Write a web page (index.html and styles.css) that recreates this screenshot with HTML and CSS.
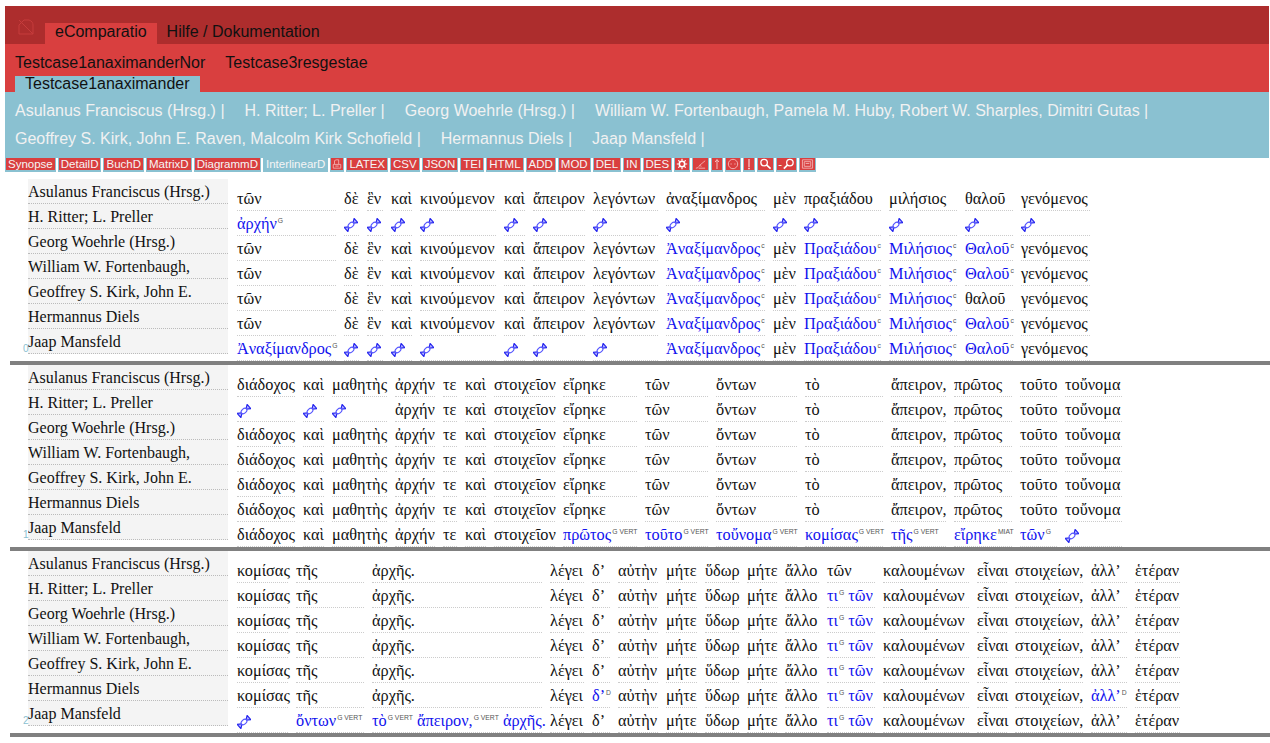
FILE: index.html
```html
<!DOCTYPE html>
<html lang="de">
<head>
<meta charset="utf-8">
<title>eComparatio</title>
<link rel="stylesheet" href="styles.css">
</head>
<body>
<svg class="defs" width="0" height="0" aria-hidden="true"><defs>
<symbol id="cand" viewBox="0 0 14 14"><g transform="rotate(-42 7 7)"><path d="M4.500 7L.3 4.200v5.600zM9.500 7l4.200-2.800v5.600z" fill="#aaf" stroke="#22e" stroke-width="1.100" stroke-linejoin="round"/><ellipse cx="7" cy="7" rx="3.300" ry="2.200" fill="#fff" stroke="#55f" stroke-width="1.100"/></g></symbol>
<symbol id="i-doc" viewBox="0 0 12 12"><path d="M3 6V2l2-1h3v5M1.500 6.500h9V11h-9zM4 8.500h4" fill="none" stroke="#f5b5b5" stroke-width="1"/></symbol>
<symbol id="i-gear" viewBox="0 0 12 12"><circle cx="6" cy="6" r="2.700" fill="none" stroke="#fff" stroke-width="1.600"/><path d="M6 .8v2M6 9.200v2M.8 6h2M9.200 6h2M2.300 2.300l1.400 1.400M8.300 8.300l1.400 1.400M2.300 9.700l1.400-1.400M8.300 3.700l1.400-1.400" stroke="#fff" stroke-width="1.200"/></symbol>
<symbol id="i-pen" viewBox="0 0 14 12"><path d="M2 10.500c2 0 3-1 4-3l6-5M5 10.500h7M6 7.500l2 1" fill="none" stroke="#f3b0b0" stroke-width="1"/></symbol>
<symbol id="i-up" viewBox="0 0 8 12"><path d="M4 11V2M2.200 4L4 1.500 5.800 4" fill="none" stroke="#f7c0c0" stroke-width="1"/></symbol>
<symbol id="i-down" viewBox="0 0 8 12"><path d="M4 1v8" stroke="#f7c0c0" stroke-width="1.400"/><path d="M3 10.500h2" stroke="#f7c0c0" stroke-width="1.400"/></symbol>
<symbol id="i-face" viewBox="0 0 12 12"><circle cx="6" cy="6" r="4.700" fill="none" stroke="#f3b0b0" stroke-width="1"/><path d="M3.500 6h1.200M7.300 6h1.200" stroke="#f3b0b0" stroke-width="1"/></symbol>
<symbol id="i-mag" viewBox="0 0 14 12"><circle cx="5.500" cy="4.500" r="3.500" fill="none" stroke="#fff" stroke-width="1.400"/><path d="M8 7l4.500 4" stroke="#fff" stroke-width="1.800"/></symbol>
<symbol id="i-magr" viewBox="0 0 14 12"><circle cx="8.500" cy="4.500" r="3.500" fill="none" stroke="#fff" stroke-width="1.400"/><path d="M6 7l-4 4" stroke="#fff" stroke-width="1.800"/></symbol>
<symbol id="i-box" viewBox="0 0 14 12"><path d="M1.500 1.500h11v9h-11zM3.500 3.500h7v5h-7zM5 5.500h4" fill="none" stroke="#f3b0b0" stroke-width="1"/></symbol>
</defs></svg>
<header class="top">
<nav class="bar-a"><svg class="logo" viewBox="0 0 16 16"><path d="M1 1l14 14M1 15V6l5-5h5c3 1 4 3 4 5v9z" fill="none" stroke="#c63c3c" stroke-width="1"/></svg><a class="tab on">eComparatio</a><a class="tab">Hilfe / Dokumentation</a></nav>
<nav class="bar-b"><div class="row"><a>Testcase1anaximanderNor</a><a>Testcase3resgestae</a></div><a class="cur">Testcase1anaximander</a></nav>
<nav class="bar-c"><a>Asulanus Franciscus (Hrsg.) |</a><a>H. Ritter; L. Preller |</a><a>Georg Woehrle (Hrsg.) |</a><a>William W. Fortenbaugh, Pamela M. Huby, Robert W. Sharples, Dimitri Gutas |</a><a>Geoffrey S. Kirk, John E. Raven, Malcolm Kirk Schofield |</a><a>Hermannus Diels |</a><a>Jaap Mansfeld |</a></nav>
<div class="tools"><b>Synopse</b><b>DetailD</b><b>BuchD</b><b>MatrixD</b><b>DiagrammD</b><b class="act">InterlinearD</b><b class="ic"><svg class="i10"><use href="#i-doc"/></svg></b><b>LATEX</b><b>CSV</b><b>JSON</b><b>TEI</b><b>HTML</b><b>ADD</b><b>MOD</b><b>DEL</b><b>IN</b><b>DES</b><b class="ic"><svg class="i12"><use href="#i-gear"/></svg></b><b class="ic"><svg class="i14"><use href="#i-pen"/></svg></b><b class="ic"><svg class="i8"><use href="#i-up"/></svg></b><b class="ic"><svg class="i12"><use href="#i-face"/></svg></b><b class="ic"><svg class="i8"><use href="#i-down"/></svg></b><b class="ic"><svg class="i14"><use href="#i-mag"/></svg></b><b class="ic minus">-<svg class="i14"><use href="#i-magr"/></svg></b><b class="ic"><svg class="i14"><use href="#i-box"/></svg></b></div>
</header>
<main>
<section class="block first">
<div class="labels"><div>Asulanus Franciscus (Hrsg.)</div><div>H. Ritter; L. Preller</div><div>Georg Woehrle (Hrsg.)</div><div>William W. Fortenbaugh,</div><div>Geoffrey S. Kirk, John E.</div><div>Hermannus Diels</div><div>Jaap Mansfeld</div></div>
<table class="t1"><colgroup><col><col><col><col><col><col><col><col><col><col><col><col><col><col></colgroup>
<tr><td>τῶν<td>δὲ<td>ἓν<td>καὶ<td>κινούμενον<td>καὶ<td>ἄπειρον<td>λεγόντων<td>ἀναξίμανδρος<td>μὲν<td>πραξιάδου<td>μιλήσιος<td>θαλοῦ<td>γενόμενος
<tr><td><i>ἀρχήν</i><sup>G</sup><td><svg class="c"><use href="#cand"/></svg><td><svg class="c"><use href="#cand"/></svg><td><svg class="c"><use href="#cand"/></svg><td><svg class="c"><use href="#cand"/></svg><td><svg class="c"><use href="#cand"/></svg><td><svg class="c"><use href="#cand"/></svg><td><svg class="c"><use href="#cand"/></svg><td><svg class="c"><use href="#cand"/></svg><td><svg class="c"><use href="#cand"/></svg><td><svg class="c"><use href="#cand"/></svg><td><svg class="c"><use href="#cand"/></svg><td><svg class="c"><use href="#cand"/></svg><td><svg class="c"><use href="#cand"/></svg>
<tr><td>τῶν<td>δὲ<td>ἓν<td>καὶ<td>κινούμενον<td>καὶ<td>ἄπειρον<td>λεγόντων<td><i>Ἀναξίμανδρος</i><sup>c</sup><td>μὲν<td><i>Πραξιάδου</i><sup>c</sup><td><i>Μιλήσιος</i><sup>c</sup><td><i>Θαλοῦ</i><sup>c</sup><td>γενόμενος
<tr><td>τῶν<td>δὲ<td>ἓν<td>καὶ<td>κινούμενον<td>καὶ<td>ἄπειρον<td>λεγόντων<td><i>Ἀναξίμανδρος</i><sup>c</sup><td>μὲν<td><i>Πραξιάδου</i><sup>c</sup><td><i>Μιλήσιος</i><sup>c</sup><td><i>Θαλοῦ</i><sup>c</sup><td>γενόμενος
<tr><td>τῶν<td>δὲ<td>ἓν<td>καὶ<td>κινούμενον<td>καὶ<td>ἄπειρον<td>λεγόντων<td><i>Ἀναξίμανδρος</i><sup>c</sup><td>μὲν<td><i>Πραξιάδου</i><sup>c</sup><td><i>Μιλήσιος</i><sup>c</sup><td>θαλοῦ<td>γενόμενος
<tr><td>τῶν<td>δὲ<td>ἓν<td>καὶ<td>κινούμενον<td>καὶ<td>ἄπειρον<td>λεγόντων<td><i>Ἀναξίμανδρος</i><sup>c</sup><td>μὲν<td><i>Πραξιάδου</i><sup>c</sup><td><i>Μιλήσιος</i><sup>c</sup><td><i>Θαλοῦ</i><sup>c</sup><td>γενόμενος
<tr><td><i>Ἀναξίμανδρος</i><sup>G</sup><td><svg class="c"><use href="#cand"/></svg><td><svg class="c"><use href="#cand"/></svg><td><svg class="c"><use href="#cand"/></svg><td><svg class="c"><use href="#cand"/></svg><td><svg class="c"><use href="#cand"/></svg><td><svg class="c"><use href="#cand"/></svg><td><svg class="c"><use href="#cand"/></svg><td><i>Ἀναξίμανδρος</i><sup>c</sup><td>μὲν<td><i>Πραξιάδου</i><sup>c</sup><td><i>Μιλήσιος</i><sup>c</sup><td><i>Θαλοῦ</i><sup>c</sup><td>γενόμενος
</table>
<span class="num">0</span>
</section>
<section class="block">
<div class="labels"><div>Asulanus Franciscus (Hrsg.)</div><div>H. Ritter; L. Preller</div><div>Georg Woehrle (Hrsg.)</div><div>William W. Fortenbaugh,</div><div>Geoffrey S. Kirk, John E.</div><div>Hermannus Diels</div><div>Jaap Mansfeld</div></div>
<table class="t2"><colgroup><col><col><col><col><col><col><col><col><col><col><col><col><col><col><col></colgroup>
<tr><td>διάδοχος<td>καὶ<td>μαθητὴς<td>ἀρχήν<td>τε<td>καὶ<td>στοιχεῖον<td>εἴρηκε<td>τῶν<td>ὄντων<td>τὸ<td>ἄπειρον,<td>πρῶτος<td>τοῦτο<td>τοὔνομα
<tr><td><svg class="c"><use href="#cand"/></svg><td><svg class="c"><use href="#cand"/></svg><td><svg class="c"><use href="#cand"/></svg><td>ἀρχήν<td>τε<td>καὶ<td>στοιχεῖον<td>εἴρηκε<td>τῶν<td>ὄντων<td>τὸ<td>ἄπειρον,<td>πρῶτος<td>τοῦτο<td>τοὔνομα
<tr><td>διάδοχος<td>καὶ<td>μαθητὴς<td>ἀρχήν<td>τε<td>καὶ<td>στοιχεῖον<td>εἴρηκε<td>τῶν<td>ὄντων<td>τὸ<td>ἄπειρον,<td>πρῶτος<td>τοῦτο<td>τοὔνομα
<tr><td>διάδοχος<td>καὶ<td>μαθητὴς<td>ἀρχήν<td>τε<td>καὶ<td>στοιχεῖον<td>εἴρηκε<td>τῶν<td>ὄντων<td>τὸ<td>ἄπειρον,<td>πρῶτος<td>τοῦτο<td>τοὔνομα
<tr><td>διάδοχος<td>καὶ<td>μαθητὴς<td>ἀρχήν<td>τε<td>καὶ<td>στοιχεῖον<td>εἴρηκε<td>τῶν<td>ὄντων<td>τὸ<td>ἄπειρον,<td>πρῶτος<td>τοῦτο<td>τοὔνομα
<tr><td>διάδοχος<td>καὶ<td>μαθητὴς<td>ἀρχήν<td>τε<td>καὶ<td>στοιχεῖον<td>εἴρηκε<td>τῶν<td>ὄντων<td>τὸ<td>ἄπειρον,<td>πρῶτος<td>τοῦτο<td>τοὔνομα
<tr><td>διάδοχος<td>καὶ<td>μαθητὴς<td>ἀρχήν<td>τε<td>καὶ<td>στοιχεῖον<td><i>πρῶτος</i><sup>G VERT</sup><td><i>τοῦτο</i><sup>G VERT</sup><td><i>τοὔνομα</i><sup>G VERT</sup><td><i>κομίσας</i><sup>G VERT</sup><td><i>τῆς</i><sup>G VERT</sup><td><i>εἴρηκε</i><sup>MIAT</sup><td><i>τῶν</i><sup>G</sup><td><svg class="c"><use href="#cand"/></svg>
</table>
<span class="num">1</span>
</section>
<section class="block">
<div class="labels"><div>Asulanus Franciscus (Hrsg.)</div><div>H. Ritter; L. Preller</div><div>Georg Woehrle (Hrsg.)</div><div>William W. Fortenbaugh,</div><div>Geoffrey S. Kirk, John E.</div><div>Hermannus Diels</div><div>Jaap Mansfeld</div></div>
<table class="t3"><colgroup><col><col><col><col><col><col><col><col><col><col><col><col><col><col><col><col></colgroup>
<tr><td>κομίσας<td>τῆς<td>ἀρχῆς.<td>λέγει<td>δ’<td>αὐτὴν<td>μήτε<td>ὕδωρ<td>μήτε<td>ἄλλο<td>τῶν<td>καλουμένων<td>εἶναι<td>στοιχείων,<td>ἀλλ’<td>ἑτέραν
<tr><td>κομίσας<td>τῆς<td>ἀρχῆς.<td>λέγει<td>δ’<td>αὐτὴν<td>μήτε<td>ὕδωρ<td>μήτε<td>ἄλλο<td><i>τι</i><sup>G</sup> <i>τῶν</i><td>καλουμένων<td>εἶναι<td>στοιχείων,<td>ἀλλ’<td>ἑτέραν
<tr><td>κομίσας<td>τῆς<td>ἀρχῆς.<td>λέγει<td>δ’<td>αὐτὴν<td>μήτε<td>ὕδωρ<td>μήτε<td>ἄλλο<td><i>τι</i><sup>G</sup> <i>τῶν</i><td>καλουμένων<td>εἶναι<td>στοιχείων,<td>ἀλλ’<td>ἑτέραν
<tr><td>κομίσας<td>τῆς<td>ἀρχῆς.<td>λέγει<td>δ’<td>αὐτὴν<td>μήτε<td>ὕδωρ<td>μήτε<td>ἄλλο<td><i>τι</i><sup>G</sup> <i>τῶν</i><td>καλουμένων<td>εἶναι<td>στοιχείων,<td>ἀλλ’<td>ἑτέραν
<tr><td>κομίσας<td>τῆς<td>ἀρχῆς.<td>λέγει<td>δ’<td>αὐτὴν<td>μήτε<td>ὕδωρ<td>μήτε<td>ἄλλο<td><i>τι</i><sup>G</sup> <i>τῶν</i><td>καλουμένων<td>εἶναι<td>στοιχείων,<td>ἀλλ’<td>ἑτέραν
<tr><td>κομίσας<td>τῆς<td>ἀρχῆς.<td>λέγει<td><i>δ’</i><sup>D</sup><td>αὐτὴν<td>μήτε<td>ὕδωρ<td>μήτε<td>ἄλλο<td><i>τι</i><sup>G</sup> <i>τῶν</i><td>καλουμένων<td>εἶναι<td>στοιχείων,<td><i>ἀλλ’</i><sup>D</sup><td>ἑτέραν
<tr><td><svg class="c"><use href="#cand"/></svg><td><i>ὄντων</i><sup>G VERT</sup><td><i>τὸ</i><sup>G VERT</sup> <i>ἄπειρον,</i><sup>G VERT</sup> <i>ἀρχῆς.</i><td>λέγει<td>δ’<td>αὐτὴν<td>μήτε<td>ὕδωρ<td>μήτε<td>ἄλλο<td><i>τι</i><sup>G</sup> <i>τῶν</i><td>καλουμένων<td>εἶναι<td>στοιχείων,<td>ἀλλ’<td>ἑτέραν
</table>
<span class="num">2</span>
</section>
</main>
</body>
</html>
```
FILE: styles.css
```css
*{box-sizing:border-box}
html,body{margin:0;background:#fff}
body{padding-top:6px;overflow:hidden;height:743px}
.defs{position:absolute}
.top{margin:0 1px 0 5px;font:16px/20px "Liberation Sans",sans-serif;color:#111}
.bar-a{background:#ad2d2d;height:38px;display:flex;align-items:flex-end;padding-left:40px;position:relative}
.logo{position:absolute;left:13px;top:13px;width:16px;height:16px}
.tab{padding:0 10px;height:21px;line-height:18px}
.tab.on{background:#d93f3f}
.bar-b{background:#d93f3f;height:48px;padding:9px 10px 0}
.row{display:flex;gap:20px;height:20px}
.cur{display:block;width:185px;height:16px;line-height:16px;background:#8ac1d1;padding-left:10px;margin-top:3px}
.bar-c{background:#8ac1d1;height:66px;padding:5px 10px 0;display:flex;flex-wrap:wrap;align-content:flex-start;column-gap:20px;line-height:28px;color:#f1f1f1}
.tools{display:flex;gap:2px;height:14px;font-size:11.5px;line-height:12px;align-items:flex-start}
.tools b{font-weight:400;background:#d93f3f;color:#f5f5f5;padding:0 2px;height:14px;border:1px solid #8ac1d1;border-width:0 1px 2px;white-space:nowrap;display:flex;align-items:center}
.tools b.act{background:#8ac1d1}
.tools b.ic{padding:0 1px}
.tools svg{display:block;height:12px}
.i10{width:10px}
.i12{width:12px}
.i14{width:13px}
.i8{width:8px}
.block{display:flex;align-items:flex-start;height:186px;margin-left:10px;border-bottom:4px solid #808080;position:relative;padding-left:18px}
.block.first{height:193px;padding-top:7px}
.labels{width:200px;flex:none;background:#f4f4f4}
.labels div{height:25px;border-bottom:1px dotted #bbb;font:16px/24px "Liberation Serif",serif;color:#111;white-space:nowrap;overflow:hidden;padding-top:1px}
.num{position:absolute;left:13px;bottom:7px;font:10px/10px "Liberation Sans",sans-serif;color:#8ac1d1}
table{table-layout:fixed;border-collapse:separate;border-spacing:8px 0;margin:7px 0 0 1px;font:16.3px/22px "Liberation Serif",serif;color:#111}
.t1{width:869px}
.t2{width:901px}
.t3{width:959px}
.t1 col:nth-child(1){width:99px}.t1 col:nth-child(2){width:15px}.t1 col:nth-child(3){width:16px}.t1 col:nth-child(4){width:21px}.t1 col:nth-child(5){width:76px}.t1 col:nth-child(6){width:21px}.t1 col:nth-child(7){width:52px}.t1 col:nth-child(8){width:65px}.t1 col:nth-child(9){width:99px}.t1 col:nth-child(10){width:23px}.t1 col:nth-child(11){width:77px}.t1 col:nth-child(12){width:68px}.t1 col:nth-child(13){width:48px}.t1 col:nth-child(14){width:69px}
.t2 col:nth-child(1){width:58px}.t2 col:nth-child(2){width:21px}.t2 col:nth-child(3){width:55px}.t2 col:nth-child(4){width:40px}.t2 col:nth-child(5){width:14px}.t2 col:nth-child(6){width:21px}.t2 col:nth-child(7){width:61px}.t2 col:nth-child(8){width:74px}.t2 col:nth-child(9){width:63px}.t2 col:nth-child(10){width:81px}.t2 col:nth-child(11){width:78px}.t2 col:nth-child(12){width:55px}.t2 col:nth-child(13){width:58px}.t2 col:nth-child(14){width:37px}.t2 col:nth-child(15){width:57px}
.t3 col:nth-child(1){width:51px}.t3 col:nth-child(2){width:68px}.t3 col:nth-child(3){width:170px}.t3 col:nth-child(4){width:34px}.t3 col:nth-child(5){width:18px}.t3 col:nth-child(6){width:40px}.t3 col:nth-child(7){width:31px}.t3 col:nth-child(8){width:34px}.t3 col:nth-child(9){width:30px}.t3 col:nth-child(10){width:34px}.t3 col:nth-child(11){width:48px}.t3 col:nth-child(12){width:86px}.t3 col:nth-child(13){width:30px}.t3 col:nth-child(14){width:68px}.t3 col:nth-child(15){width:36px}.t3 col:nth-child(16){width:45px}
td{height:25px;padding:2px 0 0;border-bottom:1px dotted #ccc;white-space:nowrap;vertical-align:top}
i{font-style:normal;color:#11e}
sup{font:6.8px/1 "Liberation Sans",sans-serif;color:#555;vertical-align:6px;margin-left:1px}
.c{width:14px;height:14px;display:block;margin-top:5px}
```
